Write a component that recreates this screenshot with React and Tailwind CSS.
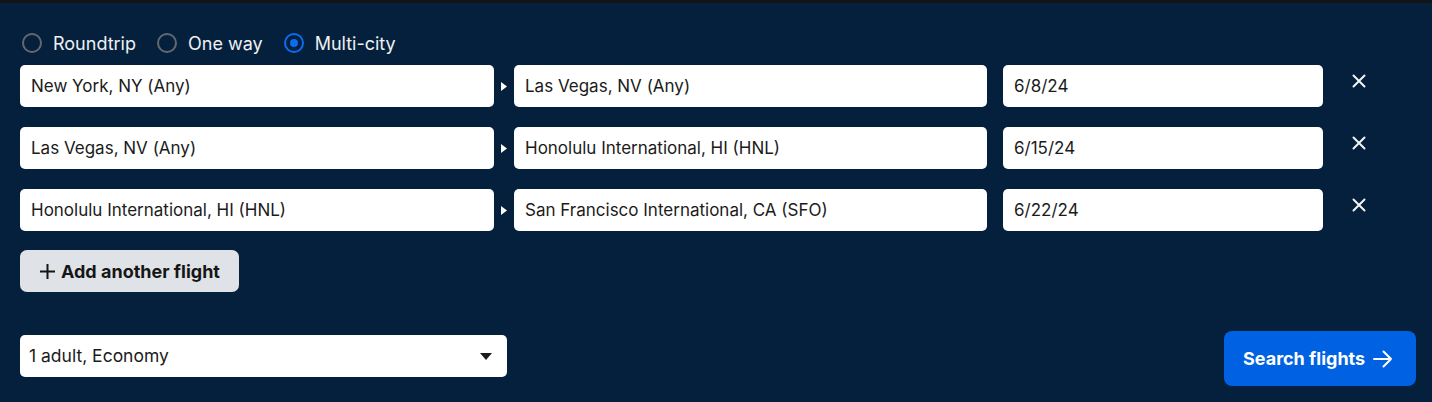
import { useState } from 'react'

const legs = [
  { from: 'New York, NY (Any)', to: 'Las Vegas, NV (Any)', date: '6/8/24' },
  { from: 'Las Vegas, NV (Any)', to: 'Honolulu International, HI (HNL)', date: '6/15/24' },
  { from: 'Honolulu International, HI (HNL)', to: 'San Francisco International, CA (SFO)', date: '6/22/24' },
]

function Radio({ label, checked, onClick }) {
  return (
    <button onClick={onClick} className="flex items-center gap-[11px] text-[18px] text-[#eef0f3]">
      {checked ? (
        <span className="w-[20px] h-[20px] rounded-full border-2 border-[#0a6cf0] flex items-center justify-center">
          <span className="w-[8px] h-[8px] rounded-full bg-[#0a6cf0]"></span>
        </span>
      ) : (
        <span className="w-[20px] h-[20px] rounded-full border-2 border-[#626971]"></span>
      )}
      {label}
    </button>
  )
}

function Field({ value, className }) {
  return (
    <div className={`h-[42px] bg-white rounded-[5px] flex items-center pl-[11px] pt-[1px] text-[17px] text-[#1b1b1b] ${className}`}>
      {value}
    </div>
  )
}

export default function App() {
  const [trip, setTrip] = useState('multi')

  return (
    <div className="w-[1432px] h-[402px] bg-[#05203c] overflow-hidden" style={{ fontFamily: 'Inter, "Noto Sans", sans-serif' }}>
      {/* window edge */}
      <div className="h-[3px] bg-[#121417]"></div>

      <div className="pl-[20px] pt-[30px]">
        {/* Trip type */}
        <div className="flex items-center gap-[21px] h-[20px] pl-[2px]">
          <Radio label="Roundtrip" checked={trip === 'round'} onClick={() => setTrip('round')} />
          <Radio label="One way" checked={trip === 'one'} onClick={() => setTrip('one')} />
          <Radio label="Multi-city" checked={trip === 'multi'} onClick={() => setTrip('multi')} />
        </div>

        {/* Legs */}
        <div className="mt-[12px] flex flex-col gap-[20px]">
          {legs.map((leg) => (
            <div key={leg.date} className="flex items-center">
              <Field value={leg.from} className="w-[474px]" />
              <div className="w-[20px] flex justify-center">
                <svg width="6" height="9" viewBox="0 0 6 9" className="ml-[-1px]">
                  <path d="M0 0 L6 4.5 L0 9 Z" fill="#ffffff" />
                </svg>
              </div>
              <Field value={leg.to} className="w-[473px]" />
              <Field value={leg.date} className="w-[320px] ml-[16px]" />
              <button className="ml-[28px] w-[16px] h-[16px] flex items-center justify-center mt-[-10px]">
                <svg width="14" height="14" viewBox="0 0 14 14">
                  <path d="M1.5 1.5 L12.5 12.5 M12.5 1.5 L1.5 12.5" stroke="#f2f4f6" strokeWidth="2" strokeLinecap="round" />
                </svg>
              </button>
            </div>
          ))}
        </div>

        <button className="mt-[19px] h-[42px] w-[219px] rounded-[7px] bg-[#dfe2e6] flex items-center pl-[19px] gap-[5px] text-[18px] font-bold text-[#161616]">
          <svg width="17" height="17" viewBox="0 0 17 17">
            <path d="M8.5 1 V16 M1 8.5 H16" stroke="#161616" strokeWidth="2" />
          </svg>
          Add another flight
        </button>

        {/* Travellers and search */}
        <div className="mt-[39px] flex items-center justify-between pr-[16px]">
          <div className="w-[487px] h-[42px] bg-white rounded-[5px] flex items-center justify-between pl-[9px] pr-[15px] text-[17.5px] text-[#1b1b1b] mt-[-5px]">
            <span>1 adult, Economy</span>
            <svg width="12" height="7" viewBox="0 0 12 7">
              <path d="M0 0 H12 L6 7 Z" fill="#1b1b1b" />
            </svg>
          </div>
          <button className="w-[192px] h-[55px] rounded-[8px] bg-[#0062e3] flex items-center pl-[19px] gap-[8px] text-[18px] font-bold text-white">
            Search flights
            <svg width="20" height="18" viewBox="0 0 20 18">
              <path d="M1 9 H18 M10.5 1.5 L18 9 L10.5 16.5" stroke="#ffffff" strokeWidth="2" fill="none" strokeLinecap="round" strokeLinejoin="round" />
            </svg>
          </button>
        </div>
      </div>
    </div>
  )
}
